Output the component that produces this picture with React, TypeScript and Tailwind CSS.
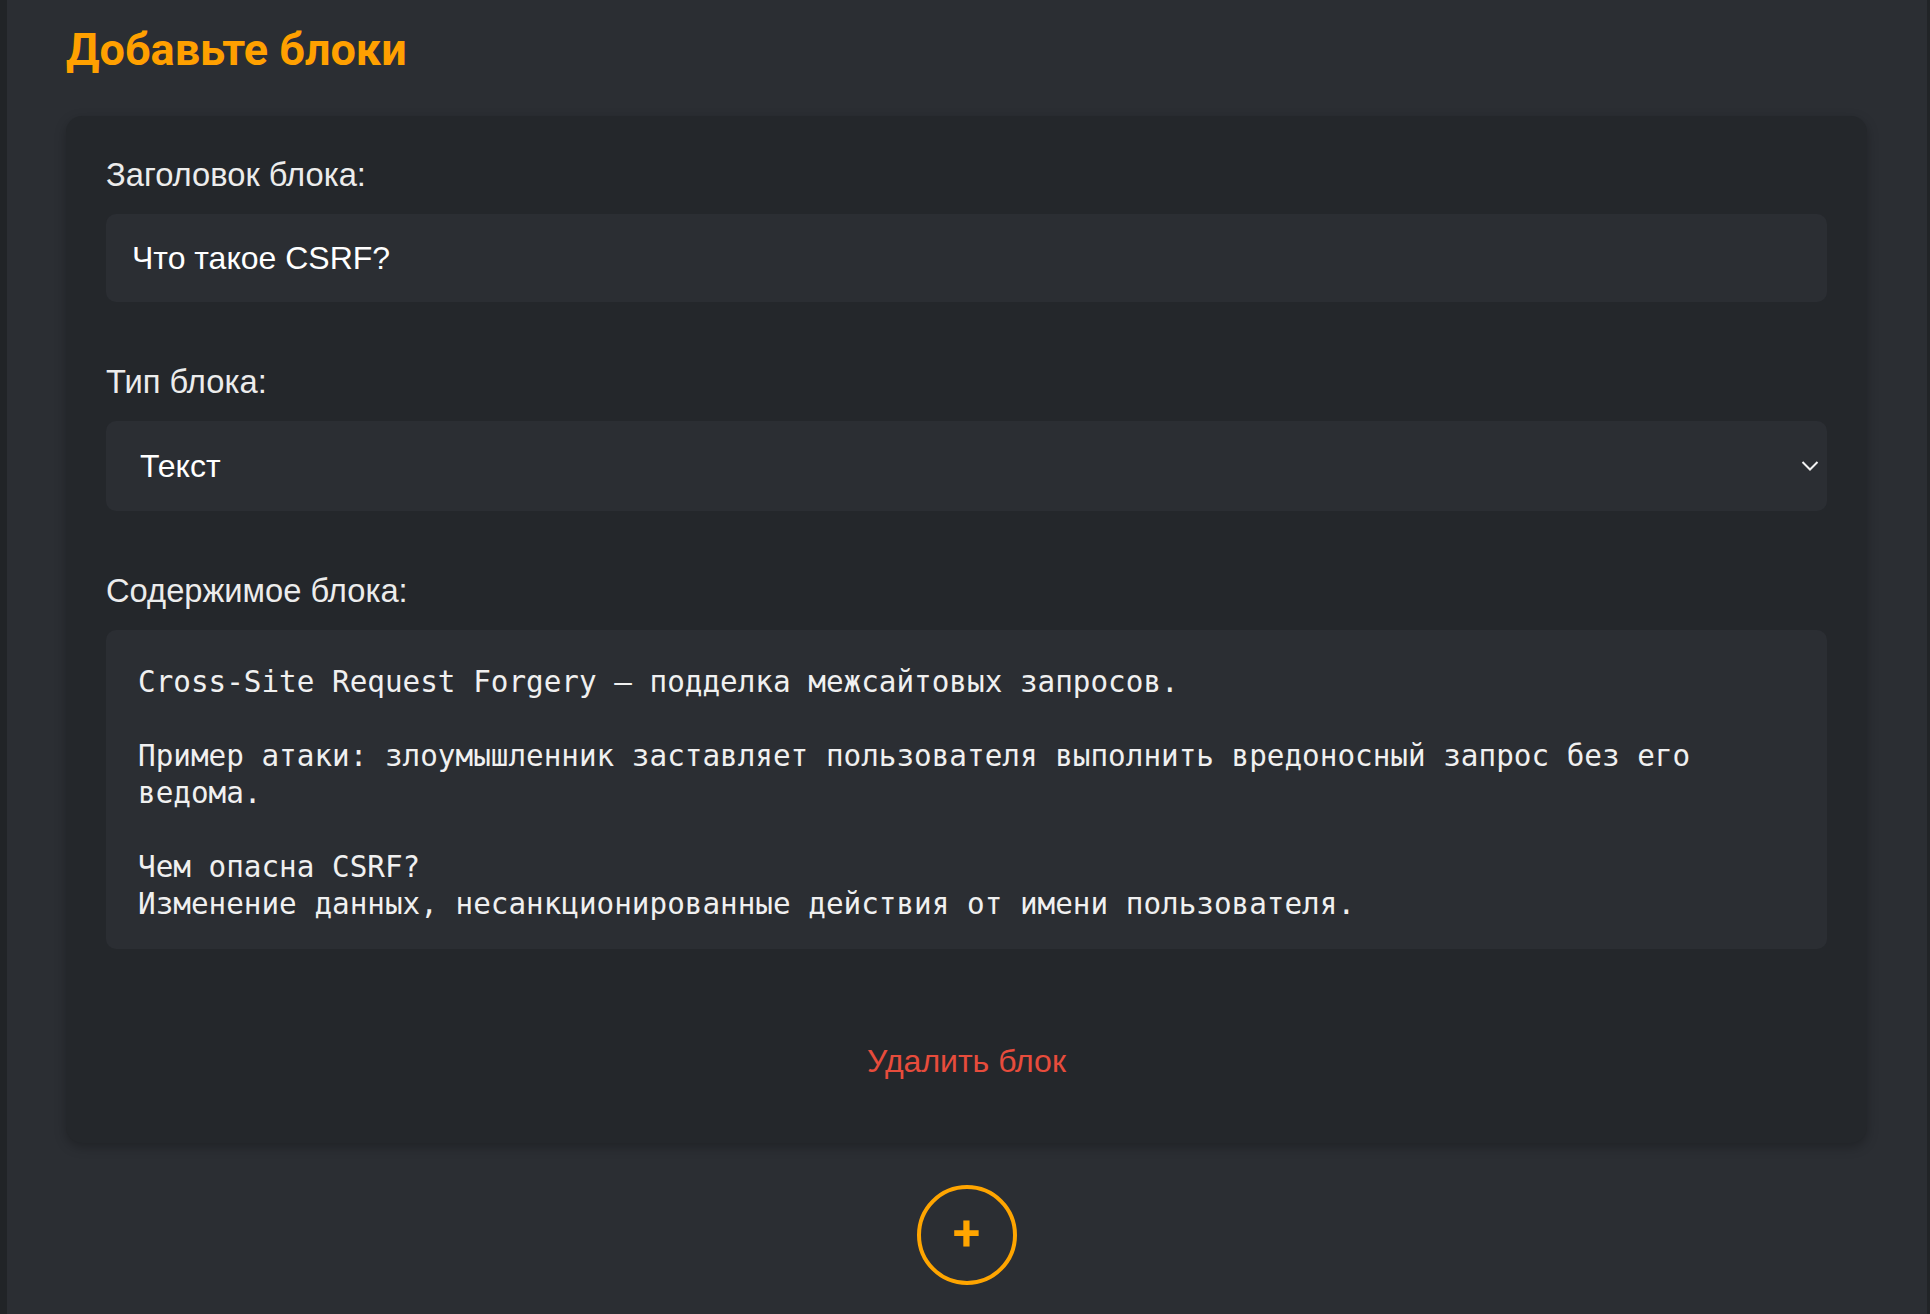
import { useState } from "react";

const CONTENT = `Cross-Site Request Forgery – подделка межсайтовых запросов.

Пример атаки: злоумышленник заставляет пользователя выполнить вредоносный запрос без его ведома.

Чем опасна CSRF?
Изменение данных, несанкционированные действия от имени пользователя.`;

const ARIAL = { fontFamily: "'Liberation Sans', Arial, sans-serif" };

function Label({ children }: { children: React.ReactNode }) {
  return (
    <label className="block text-[32.7px] leading-[36px] text-[#ececec] mb-[21px]" style={ARIAL}>
      {children}
    </label>
  );
}

export default function App() {
  const [title, setTitle] = useState("Что такое CSRF?");
  const [type, setType] = useState("text");
  const [content, setContent] = useState(CONTENT);

  return (
    <div className="min-h-screen flex bg-[#212427]" style={{ fontFamily: "Roboto, 'Noto Sans', sans-serif" }}>
      <main className="flex-1 ml-[7px] mr-[3px] bg-[#2b2e33] pl-[59px] pr-[60px] pt-[23px] pb-[30px]">
        <h2 className="text-[45px] leading-[54px] font-bold text-[#ffa000] mb-[39px]">Добавьте блоки</h2>

        {/* block card */}
        <div className="bg-[#24272b] rounded-[16px] shadow-[0_4px_12px_rgba(0,0,0,0.25)] px-[40px] pt-[41px] pb-[64px]">
          <Label>Заголовок блока:</Label>
          <input
            value={title}
            onChange={(e) => setTitle(e.target.value)}
            className="w-full h-[88px] rounded-[10px] bg-[#2b2e33] px-[26px] text-[32px] text-white outline-none mb-[62px]"
            style={ARIAL}
          />

          <Label>Тип блока:</Label>
          <div className="relative mb-[62px]">
            <select
              value={type}
              onChange={(e) => setType(e.target.value)}
              className="appearance-none w-full h-[90px] rounded-[10px] bg-[#2b2e33] pl-[34px] pr-[60px] text-[32px] text-white outline-none"
              style={ARIAL}
            >
              <option value="text">Текст</option>
              <option value="code">Код</option>
              <option value="image">Изображение</option>
            </select>
            <svg
              className="absolute right-[8px] top-1/2 -translate-y-1/2 pointer-events-none"
              width="18"
              height="11"
              viewBox="0 0 18 11"
              fill="none"
            >
              <polyline points="1.5,1.5 9,9 16.5,1.5" stroke="#f2f2f2" strokeWidth="2" />
            </svg>
          </div>

          <Label>Содержимое блока:</Label>
          <textarea
            value={content}
            onChange={(e) => setContent(e.target.value)}
            className="block w-full h-[319px] rounded-[10px] bg-[#2b2e33] px-[32px] pt-[34px] text-[29.3px] leading-[37px] text-[#f0f0f0] outline-none resize-none overflow-hidden"
            style={{ fontFamily: "'DejaVu Sans Mono', 'Liberation Mono', monospace" }}
          />

          <div className="flex justify-center mt-[94px]">
            <button className="text-[32px] leading-[36px] text-[#e74c3c]" style={ARIAL}>
              Удалить блок
            </button>
          </div>
        </div>

        <div className="flex justify-center mt-[42px]">
          <button className="w-[100px] h-[100px] rounded-full border-[4px] border-[#ffa500] flex items-center justify-center text-[#ffa500] text-[50px] font-semibold leading-none pb-[4px]">
            +
          </button>
        </div>
      </main>
    </div>
  );
}
